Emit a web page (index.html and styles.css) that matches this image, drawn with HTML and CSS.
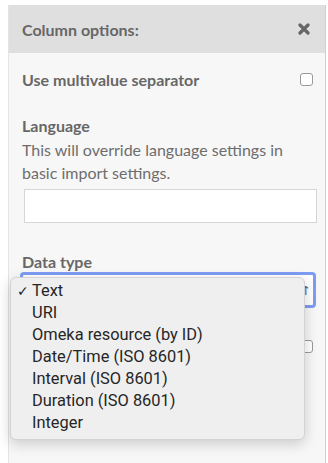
FILE: index.html
```html
<!DOCTYPE html>
<html lang="en">
<head>
    <meta charset="UTF-8">
    <meta name="viewport" content="width=device-width, initial-scale=1.0">
    <title>Column options</title>
    <link rel="stylesheet" href="styles.css">
</head>
<body>
    <div class="panel">
        <div class="panel-header">
            <h2>Column options:</h2>
            <svg class="close" width="12" height="12" viewBox="0 0 12 12">
                <path d="M2 2 L10 10 M10 2 L2 10" stroke="#666" stroke-width="3.2" stroke-linecap="round"/>
            </svg>
        </div>
        <div class="panel-body">
            <div class="option-row">
                <label>Use multivalue separator</label>
                <span class="checkbox"></span>
            </div>

            <div class="field">
                <label>Language</label>
                <p class="hint">This will override language settings in basic import settings.</p>
                <div class="text-input"></div>
            </div>

            <div class="field data-type">
                <label>Data type</label>
                <div class="select-wrap">
                    <div class="select">
                        <span class="arrows">&#8693;</span>
                    </div>
                    <ul class="dropdown">
                        <li class="checked">Text</li>
                        <li>URI</li>
                        <li>Omeka resource (by ID)</li>
                        <li>Date/Time (ISO 8601)</li>
                        <li>Interval (ISO 8601)</li>
                        <li>Duration (ISO 8601)</li>
                        <li>Integer</li>
                    </ul>
                </div>
            </div>

            <div class="option-row lower">
                <span class="checkbox"></span>
            </div>
        </div>
    </div>
</body>
</html>
```

FILE: styles.css
```css
body {
    margin: 0;
    background-color: #fff;
    font-family: Lato, "Open Sans", sans-serif;
    color: #676767;
}
.panel {
    margin: 5px 0 0 8px;
    width: 318px;
    height: 458px;
    border-left: 1px solid #e4e4e4;
    border-right: 1px solid #cfcfcf;
    box-sizing: border-box;
    background-color: #f7f7f7;
}
.panel-header {
    background-color: #dfdfdf;
    height: 48px;
    display: flex;
    align-items: center;
    justify-content: space-between;
    padding: 0 15px 0 13px;
}
.panel-header h2 {
    margin: 0;
    font-size: 16px;
    font-weight: 700;
    color: #676767;
}
.panel-body {
    padding: 14px 8px 0 13px;
}
.option-row {
    display: flex;
    align-items: center;
    justify-content: space-between;
    height: 24px;
    padding-right: 4px;
}
.option-row.lower {
    margin-top: 26px;
    justify-content: flex-end;
}
.option-row label,
.field label {
    font-size: 16px;
    font-weight: 700;
    color: #676767;
}
.checkbox {
    width: 11px;
    height: 11px;
    border: 1px solid #9a9a9a;
    border-radius: 3px;
    background-color: #fff;
}
.field {
    margin-top: 23px;
}
.field label {
    display: block;
    line-height: 24px;
}
.hint {
    margin: 0;
    font-size: 16px;
    line-height: 23px;
    color: #6d6d6d;
}
.text-input {
    margin: 5px 0 0 2px;
    height: 32px;
    background-color: #fff;
    border: 1px solid #d6d6d6;
}
.field.data-type {
    margin-top: 27px;
}
.select-wrap {
    position: relative;
    margin: -2px 1px 0 -2px;
}
.select {
    height: 30px;
    border: 3px solid #7d9cf3;
    border-radius: 4px;
    background-color: #fff;
    display: flex;
    align-items: center;
    justify-content: flex-end;
    padding-right: 4px;
}
.arrows {
    font-size: 12px;
    color: #555;
}
.dropdown {
    position: absolute;
    left: -10px;
    top: 5px;
    width: 295px;
    box-sizing: border-box;
    margin: 0;
    padding: 2px 0 5px;
    list-style: none;
    background-color: #efefef;
    border: 1px solid #d3d3d3;
    border-radius: 6px;
    box-shadow: 0 4px 14px rgba(0, 0, 0, 0.18);
    font-family: Roboto, "Noto Sans", sans-serif;
    font-size: 16.4px;
    color: #262626;
}
.dropdown li {
    height: 22px;
    line-height: 22px;
    padding-left: 21px;
    position: relative;
}
.dropdown li.checked::before {
    content: "\2713";
    position: absolute;
    left: 6px;
    font-size: 14px;
}
```
